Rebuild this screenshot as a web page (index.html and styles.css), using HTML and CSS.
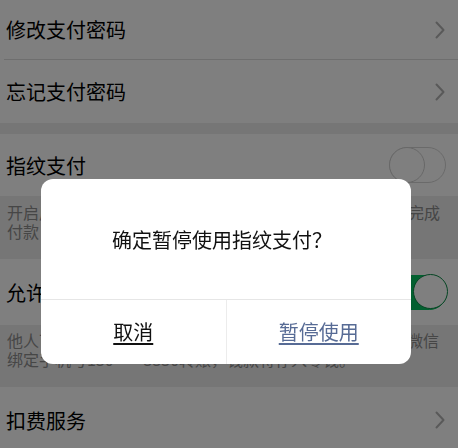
FILE: index.html
```html
<!DOCTYPE html>
<html lang="zh-CN">
<head>
<meta charset="utf-8">
<title>支付设置</title>
<link rel="stylesheet" href="styles.css">
</head>
<body>
<div class="page">
  <div class="row row-a"><span class="title">修改支付密码</span><svg class="chev" viewBox="0 0 10 18" width="10" height="18"><polyline points="1.5,1.5 8.5,9 1.5,16.5"/></svg></div>
  <div class="sep"></div>
  <div class="row row-b"><span class="title">忘记支付密码</span><svg class="chev" viewBox="0 0 10 18" width="10" height="18"><polyline points="1.5,1.5 8.5,9 1.5,16.5"/></svg></div>
  <div class="band"></div>
  <div class="row row-c"><span class="title">指纹支付</span><span class="switch"><span class="knob"></span></span></div>
  <div class="desc desc-a">开启后，转账或消费时，可使用Touch ID验证指纹，快速完成<br>付款</div>
  <div class="row row-d"><span class="title">允许通过手机号向我转账</span><span class="switch on"><span class="knob"></span></span></div>
  <div class="desc desc-b">他人可通过你绑定的手机号给你转账，钱款将直接存入你微信<br>绑定手机号130****3330转账，钱款将存入零钱。</div>
  <div class="row row-e"><span class="title">扣费服务</span><svg class="chev" viewBox="0 0 10 18" width="10" height="18"><polyline points="1.5,1.5 8.5,9 1.5,16.5"/></svg></div>
</div>
<div class="mask"></div>
<div class="dialog">
  <div class="dialog-body">确定暂停使用指纹支付？</div>
  <div class="dialog-foot">
    <span class="btn btn-cancel">取消</span>
    <span class="btn btn-ok">暂停使用</span>
  </div>
</div>
</body>
</html>
```
FILE: styles.css
```css
* { box-sizing: border-box; }
html, body {
  margin: 0;
  padding: 0;
  width: 458px;
  height: 448px;
  overflow: hidden;
  background: #ededed;
  font-family: "Noto Sans CJK SC", "Noto Sans", sans-serif;
}
.page {
  display: flex;
  flex-direction: column;
}
.row {
  display: flex;
  align-items: center;
  justify-content: space-between;
  background: #ffffff;
  padding: 0 12px 0 6px;
  flex: none;
}
.title {
  font-size: 20px;
  color: #000000;
  white-space: nowrap;
}
.row-a { height: 59px; }
.row-b { height: 63px; }
.row-c { height: 62px; }
.row-d { height: 66px; padding-right: 11px; }
.row-e { height: 66px; }
.sep {
  height: 1px;
  background: #fff;
  flex: none;
}
.sep::before {
  content: "";
  display: block;
  height: 1px;
  margin-left: 4px;
  background: #dcdcdc;
}
.band {
  height: 11px;
  flex: none;
}
.chev {
  margin-right: 1px;
  fill: none;
  stroke: #b3b3b3;
  stroke-width: 2;
  stroke-linecap: round;
  stroke-linejoin: round;
}
.desc {
  font-size: 16px;
  line-height: 19px;
  color: #8c8c8c;
  padding-left: 7px;
  white-space: nowrap;
  overflow: hidden;
  flex: none;
}
.desc-a { height: 63px; padding-top: 7px; }
.desc-b { height: 62px; padding-top: 6px; }
.switch {
  position: relative;
  width: 57px;
  height: 36px;
  border-radius: 18px;
  border: 1.5px solid #d4d4d4;
  background: #fff;
  flex: none;
}
.switch .knob {
  position: absolute;
  left: -1.5px;
  top: -1.5px;
  width: 36px;
  height: 36px;
  border-radius: 50%;
  background: #fff;
  border: 1.5px solid #cfcfcf;
}
.switch.on {
  background: #07c160;
  border-color: #07c160;
  width: 58px;
  height: 35px;
}
.switch.on .knob {
  left: auto;
  right: -1.5px;
  width: 35px;
  height: 35px;
  border-color: #0a8a46;
}
.mask {
  position: fixed;
  inset: 0;
  background: rgba(0, 0, 0, 0.5);
}
.dialog {
  position: fixed;
  left: 41px;
  top: 179px;
  width: 370px;
  height: 185px;
  background: #fff;
  border-radius: 12px;
  display: flex;
  flex-direction: column;
  overflow: hidden;
}
.dialog-body {
  height: 120px;
  display: flex;
  align-items: center;
  justify-content: center;
  font-size: 20px;
  color: #111;
  padding-right: 8px;
}
.dialog-foot {
  flex: 1;
  display: flex;
  border-top: 1px solid #e6e6e6;
}
.btn {
  flex: 1;
  display: flex;
  align-items: center;
  justify-content: center;
  font-size: 20px;
  text-decoration: underline;
  text-decoration-thickness: 1.5px;
  text-underline-offset: 3px;
  padding-bottom: 2px;
}
.btn-cancel { color: #111; }
.btn-ok {
  color: #576b95;
  border-left: 1px solid #ececec;
}
```
